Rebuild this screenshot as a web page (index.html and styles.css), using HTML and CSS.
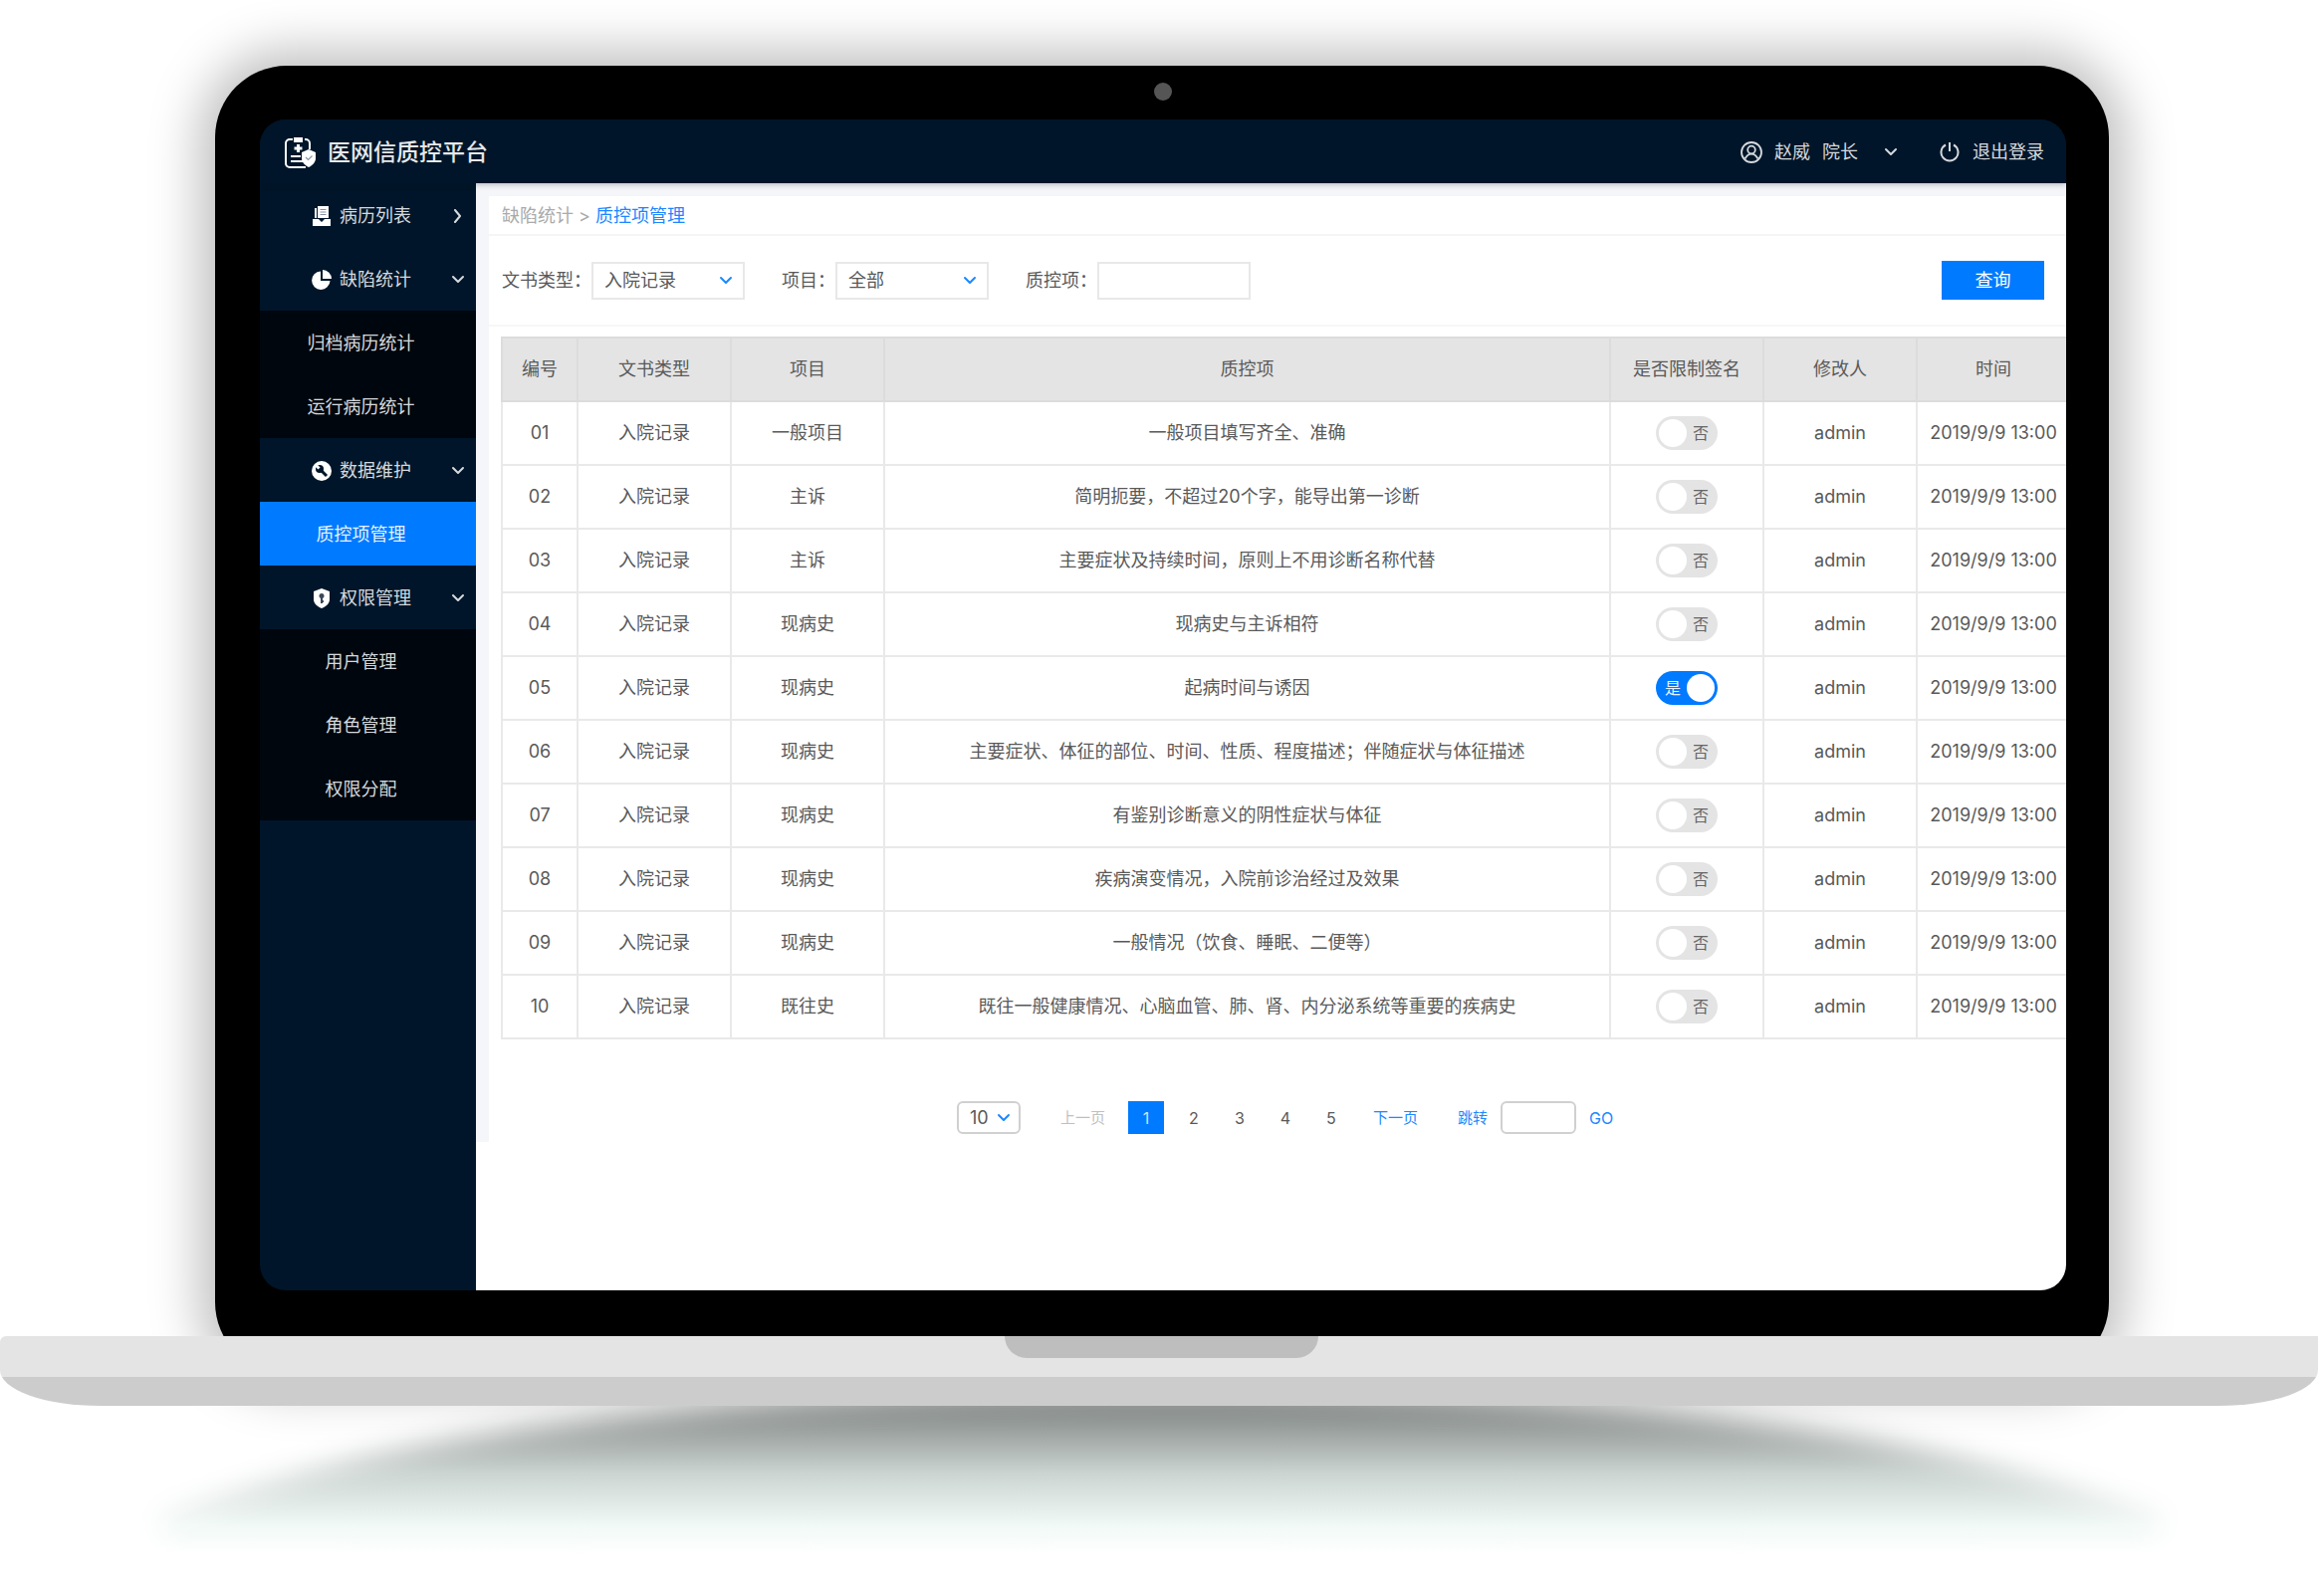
FILE: index.html
```html
<!DOCTYPE html>
<html lang="zh-CN">
<head>
<meta charset="utf-8">
<title>医网信质控平台</title>
<link rel="stylesheet" href="styles.css">
</head>
<body>
<svg class="sprite" aria-hidden="true">
  <symbol id="down" viewBox="0 0 14 10"><path d="M2 2l5 5 5-5" fill="none" stroke="currentColor" stroke-width="2" stroke-linecap="round" stroke-linejoin="round"/></symbol>
  <symbol id="right" viewBox="0 0 10 14"><path d="M2 1l5 6-5 6" fill="none" stroke="currentColor" stroke-width="2" stroke-linecap="round" stroke-linejoin="round"/></symbol>
</svg>
<div class="laptop">
  <div class="lid">
    <div class="camera"></div>
    <div class="screen">
      <header class="topbar">
        <svg class="logo" viewBox="0 0 34 34" aria-hidden="true">
          <path d="M10 4H7a4 4 0 0 0-4 4v20a4 4 0 0 0 4 4h16M22 4h1a4 4 0 0 1 4 4v6" fill="none" stroke="#fff" stroke-width="2"/>
          <path d="M11 2h9v5h-9z" fill="#fff"/>
          <path d="M15.500 9v8M11.500 13h8" stroke="#fff" stroke-width="3"/>
          <path d="M8 21h10M8 26h12" stroke="#fff" stroke-width="2"/>
          <path d="M26 14l7 3v6c0 4-3 7-7 9-4-2-7-5-7-9v-6z" fill="#fff"/>
          <path d="M23 22l2.500 2.500 4-4" fill="none" stroke="#8d98a5" stroke-width="1.200"/>
        </svg>
        <h1 class="brand">医网信质控平台</h1>
        <button class="user" type="button">
          <svg class="user-icon" viewBox="0 0 22 22" fill="none" stroke="currentColor" stroke-width="1.800" aria-hidden="true"><circle cx="11" cy="11" r="10"/><circle cx="11" cy="8.500" r="3.800"/><path d="M4.500 17.500c2-3.600 4-4.800 6.500-4.800s4.500 1.200 6.500 4.800"/></svg>
          <span>赵威</span><span>院长</span>
          <svg class="chev user-chev" aria-hidden="true"><use href="#down"/></svg>
        </button>
        <button class="logout" type="button">
          <svg class="power-icon" viewBox="0 0 20 20" fill="none" stroke="currentColor" stroke-width="2" aria-hidden="true"><path d="M6 2.500a8.500 8.500 0 1 0 8 0M10 0v9"/></svg>
          <span>退出登录</span>
        </button>
      </header>
      <div class="body">
        <nav class="sidebar">
          <a class="group" href="#">
            <svg class="nav-icon" viewBox="0 0 20 20" aria-hidden="true"><path d="M3 2h2v10H3zM6 0h11v12H6z" fill="#fff"/><path d="M8.500 3.500h6M8.500 6h6M8.500 8.500h6" stroke="#8490a0"/><path d="M1 13h6l3 3 3-3h6v7H1z" fill="#fff"/></svg>
            <span>病历列表</span><svg class="chev-right" aria-hidden="true"><use href="#right"/></svg>
          </a>
          <a class="group" href="#">
            <svg class="nav-icon" viewBox="0 0 20 20" aria-hidden="true"><path d="M9 1.500V11h9.500A9.200 9.200 0 1 1 9 1.500z" fill="#fff"/><path d="M11 0a9 9 0 0 1 9 9h-9z" fill="#fff"/></svg>
            <span>缺陷统计</span><svg class="chev" aria-hidden="true"><use href="#down"/></svg>
          </a>
          <div class="sub"><a href="#">归档病历统计</a><a href="#">运行病历统计</a></div>
          <a class="group" href="#">
            <svg class="nav-icon" viewBox="0 0 20 20" aria-hidden="true"><circle cx="10" cy="10" r="10" fill="#fff"/><path d="M9.500 9.500l5.500 5.500" stroke="#001529" stroke-width="3"/><circle cx="8" cy="8" r="4" fill="#001529"/><path d="M3.500 3.500l4 4" stroke="#fff" stroke-width="3"/></svg>
            <span>数据维护</span><svg class="chev" aria-hidden="true"><use href="#down"/></svg>
          </a>
          <div class="sub"><a class="active" href="#" aria-current="page">质控项管理</a></div>
          <a class="group" href="#">
            <svg class="nav-icon" viewBox="0 0 20 20" aria-hidden="true"><path d="M10 0l8 3v8c0 4-3 7-8 9-5-2-8-5-8-9V3z" fill="#fff"/><circle cx="10" cy="7.500" r="2.500" fill="#3a4859"/><path d="M10 8v7M10 13h2" stroke="#3a4859" stroke-width="2"/></svg>
            <span>权限管理</span><svg class="chev" aria-hidden="true"><use href="#down"/></svg>
          </a>
          <div class="sub"><a href="#">用户管理</a><a href="#">角色管理</a><a href="#">权限分配</a></div>
        </nav>
        <main class="content">
          <div class="canvas">
            <div class="panel">
              <div class="crumbs"><a href="#">缺陷统计</a><span>&gt;</span><a class="here" href="#">质控项管理</a></div>
              <form class="filters">
                <div class="field"><label for="doc">文书类型：</label>
                  <div class="pick"><select id="doc"><option>入院记录</option></select><svg class="chev" aria-hidden="true"><use href="#down"/></svg></div></div>
                <div class="field"><label for="item">项目：</label>
                  <div class="pick"><select id="item"><option>全部</option></select><svg class="chev" aria-hidden="true"><use href="#down"/></svg></div></div>
                <div class="field"><label for="qc">质控项：</label><input class="text" id="qc" type="text"></div>
                <button class="query" type="button">查询</button>
              </form>
              <div class="table-wrap">
                <table>
                  <colgroup><col class="c-no"><col class="c-mid"><col class="c-mid"><col><col class="c-mid"><col class="c-mid"><col class="c-mid"></colgroup>
                  <thead><tr><th>编号</th><th>文书类型</th><th>项目</th><th>质控项</th><th>是否限制签名</th><th>修改人</th><th>时间</th></tr></thead>
                  <tbody>
                    <tr><td>01</td><td>入院记录</td><td>一般项目</td><td>一般项目填写齐全、准确</td><td><label class="switch"><input type="checkbox"><span>否</span></label></td><td>admin</td><td>2019/9/9 13:00</td></tr>
                    <tr><td>02</td><td>入院记录</td><td>主诉</td><td>简明扼要，不超过20个字，能导出第一诊断</td><td><label class="switch"><input type="checkbox"><span>否</span></label></td><td>admin</td><td>2019/9/9 13:00</td></tr>
                    <tr><td>03</td><td>入院记录</td><td>主诉</td><td>主要症状及持续时间，原则上不用诊断名称代替</td><td><label class="switch"><input type="checkbox"><span>否</span></label></td><td>admin</td><td>2019/9/9 13:00</td></tr>
                    <tr><td>04</td><td>入院记录</td><td>现病史</td><td>现病史与主诉相符</td><td><label class="switch"><input type="checkbox"><span>否</span></label></td><td>admin</td><td>2019/9/9 13:00</td></tr>
                    <tr><td>05</td><td>入院记录</td><td>现病史</td><td>起病时间与诱因</td><td><label class="switch"><input type="checkbox" checked><span>是</span></label></td><td>admin</td><td>2019/9/9 13:00</td></tr>
                    <tr><td>06</td><td>入院记录</td><td>现病史</td><td>主要症状、体征的部位、时间、性质、程度描述；伴随症状与体征描述</td><td><label class="switch"><input type="checkbox"><span>否</span></label></td><td>admin</td><td>2019/9/9 13:00</td></tr>
                    <tr><td>07</td><td>入院记录</td><td>现病史</td><td>有鉴别诊断意义的阴性症状与体征</td><td><label class="switch"><input type="checkbox"><span>否</span></label></td><td>admin</td><td>2019/9/9 13:00</td></tr>
                    <tr><td>08</td><td>入院记录</td><td>现病史</td><td>疾病演变情况，入院前诊治经过及效果</td><td><label class="switch"><input type="checkbox"><span>否</span></label></td><td>admin</td><td>2019/9/9 13:00</td></tr>
                    <tr><td>09</td><td>入院记录</td><td>现病史</td><td>一般情况（饮食、睡眠、二便等）</td><td><label class="switch"><input type="checkbox"><span>否</span></label></td><td>admin</td><td>2019/9/9 13:00</td></tr>
                    <tr><td>10</td><td>入院记录</td><td>既往史</td><td>既往一般健康情况、心脑血管、肺、肾、内分泌系统等重要的疾病史</td><td><label class="switch"><input type="checkbox"><span>否</span></label></td><td>admin</td><td>2019/9/9 13:00</td></tr>
                  </tbody>
                </table>
              </div>
              <div class="pager">
                <div class="pick size"><select aria-label="每页条数"><option>10</option></select><svg class="chev" aria-hidden="true"><use href="#down"/></svg></div>
                <button class="prev" type="button" disabled>上一页</button>
                <div class="pages"><button class="current" type="button">1</button><button type="button">2</button><button type="button">3</button><button type="button">4</button><button type="button">5</button></div>
                <button class="next" type="button">下一页</button>
                <div class="jump"><label for="jump">跳转</label><input class="text" id="jump" type="text"><button type="button">GO</button></div>
              </div>
            </div>
          </div>
        </main>
      </div>
    </div>
  </div>
  <div class="base"><div class="notch"></div></div>
  <svg class="ground" viewBox="0 0 2328 186" preserveAspectRatio="none" aria-hidden="true">
    <defs>
      <linearGradient id="fade" gradientUnits="userSpaceOnUse" x1="0" y1="0" x2="0" y2="150">
        <stop offset="0" stop-color="#818684"/>
        <stop offset=".28" stop-color="#aeb5b2"/>
        <stop offset=".45" stop-color="#cbd4d1"/>
        <stop offset=".66" stop-color="#e2eae7"/>
        <stop offset=".8" stop-color="#f1f9f6"/>
        <stop offset="1" stop-color="#fff"/>
      </linearGradient>
      <filter id="soft" x="-10%" y="-30%" width="120%" height="160%"><feGaussianBlur stdDeviation="14 14"/></filter>
      <mask id="crescent" maskUnits="userSpaceOnUse" x="0" y="-60" width="2328" height="300">
        <path d="M162 116C420 12 800-14 1166-14S1912 12 2170 116Q2180 160 2100 190H230Q150 160 162 116z" fill="#fff" filter="url(#soft)"/>
      </mask>
    </defs>
    <rect width="2328" height="186" fill="url(#fade)" mask="url(#crescent)"/>
  </svg>
</div>
</body>
</html>
```
FILE: styles.css
```css
* { box-sizing: border-box; }

body {
  margin: 0;
  background: #fff;
  color: #595959;
  font: 18px/24px Inter, "Noto Sans CJK SC", sans-serif;
}

h1 { margin: 0; }
a { color: inherit; text-decoration: none; }
button, input, select { font: inherit; color: inherit; }
button { padding: 0; border: 0; background: none; }
.sprite { display: none; }

/* Laptop frame */
.laptop { padding-top: 66px; overflow: hidden; }

.lid {
  margin: 0 216px;
  padding: 17px 43px 84px 45px;
  border-radius: 72px;
  background: #000;
  box-shadow: 0 0 50px 16px rgba(0, 0, 0, .25);
}

.camera {
  width: 18px;
  height: 18px;
  margin: 0 auto 19px;
  border-radius: 50%;
  background: #555;
}

.screen {
  border-radius: 26px;
  background: #001529;
  overflow: hidden;
}

.base {
  position: relative;
  height: 70px;
  margin: -38px 6px 0 0;
  padding-left: 4px;
  border-radius: 6px 0 100px 100px / 6px 0 36px 36px;
  background: linear-gradient(#e4e4e4 41px, #ccc 41px);
}

.notch {
  width: 315px;
  height: 22px;
  margin: 0 auto;
  border-radius: 0 0 22px 22px;
  background: #bebebe;
}

.ground { display: block; width: calc(100% - 6px); height: 186px; }

/* Top bar */
.topbar {
  position: relative;
  display: flex;
  align-items: center;
  height: 64px;
  padding: 2px 22px 0 23px;
  background: #001529;
  box-shadow: 0 1px 6px rgba(0, 21, 41, .3);
  color: #d5d9de;
}

.logo { width: 34px; height: 34px; margin-right: 11px; }
.brand { flex: 1; color: #e6e8ea; font-size: 23px; font-weight: 500; line-height: 32px; }
.user, .logout { display: flex; align-items: center; gap: 12px; }
.logout { gap: 13px; margin-left: 42px; }
.user-icon { width: 22px; height: 22px; }
.power-icon { width: 20px; height: 20px; }
.chev { flex: none; width: 14px; height: 10px; }
.chev-right { flex: none; width: 10px; height: 14px; }
.user-chev { margin-left: 14px; }

/* Side menu */
.body { display: flex; min-height: 1112px; }
.sidebar { flex: none; width: 217px; color: #d5d9de; }

.group {
  display: flex;
  align-items: center;
  height: 64px;
  padding: 2px 11px 0 52px;
}

.group span { flex: 1; padding-left: 8px; }
.group .chev-right { margin-right: 2px; }
.nav-icon { width: 20px; height: 20px; }
.sub { background: #00060d; }

.sub a {
  display: flex;
  align-items: center;
  justify-content: center;
  height: 64px;
  padding: 2px 14px 0 0;
}

.sub .active { background: #007aff; color: #e6f2ff; }

/* Work area */
.content { flex: 1; min-width: 0; background: #fff; }
.canvas { padding: 13px 0 0 13px; background: #f4f6f9; }
.panel { background: #fff; }

.crumbs {
  display: flex;
  align-items: center;
  gap: 5px;
  height: 40px;
  padding: 2px 13px 0;
  border-bottom: 2px solid #f5f5f5;
  color: #aaa;
}

.crumbs .here { color: #1a88ff; }

.filters {
  display: flex;
  align-items: center;
  gap: 37px;
  height: 91px;
  padding: 0 22px 0 13px;
  border-bottom: 2px solid #f7f7f7;
}

.field { display: flex; align-items: center; }

.text, .pick select {
  width: 154px;
  height: 38px;
  padding: 0 11px;
  border: 2px solid #e8e8e8;
  border-radius: 0;
  background: #fff;
  appearance: none;
}

.pick { display: grid; align-items: center; color: #595959; }
.pick select, .pick .chev { grid-area: 1 / 1; }
.pick .chev { justify-self: end; margin-right: 12px; color: #1a88ff; pointer-events: none; }

.query {
  width: 103px;
  height: 39px;
  margin-left: auto;
  background: #007aff;
  color: #fff;
}

/* Records; the last column runs past the edge of the screen */
.table-wrap { padding: 10px 0 0 12px; overflow: hidden; }

table {
  width: calc(100% + 5px);
  border-collapse: collapse;
  table-layout: fixed;
  text-align: center;
}

.c-no { width: 76px; }
.c-mid { width: 154px; }
tr { height: 64px; }
th, td { padding: 0; border: 2px solid #e9e9e9; white-space: nowrap; }
th { border-color: #dcdcdc; background: #e4e4e4; font-weight: 400; }

.switch { display: inline-grid; align-items: center; vertical-align: middle; color: #666; font-size: 16px; }
.switch input, .switch span { grid-area: 1 / 1; }

.switch input {
  display: flex;
  align-items: center;
  width: 62px;
  height: 34px;
  margin: 0;
  padding: 0 3px;
  border-radius: 17px;
  background: #e4e4e4;
  appearance: none;
}

.switch input::before { content: ""; width: 28px; height: 28px; border-radius: 50%; background: #fff; }
.switch span { z-index: 1; justify-self: end; margin: 0 9px; }
.switch input:checked { justify-content: flex-end; background: #007aff; }
.switch input:checked + span { justify-self: start; color: #e6f2ff; }

/* Paging */
.pager {
  display: flex;
  align-items: center;
  justify-content: center;
  padding: 62px 0 8px 15px;
  font-size: 16px;
}

.prev, .next { font-size: 15px; }
.prev { margin: 0 23px 0 40px; color: #bfbfbf; }
.next { margin: 0 40px 0 24px; color: #1a88ff; }
.pages { display: flex; gap: 10px; }
.pages button { width: 36px; height: 33px; }
.pages .current { margin-right: 2px; background: #007aff; color: #cce4ff; }
.jump { display: flex; align-items: center; gap: 13px; color: #1a88ff; }
.jump label { font-size: 15px; }
.jump .text, .size select { height: 33px; border-color: #d0d0d0; border-radius: 6px; }
.jump .text { width: 76px; }
.size select { width: 64px; font-size: 18px; }
.size .chev { margin-right: 10px; }
```
